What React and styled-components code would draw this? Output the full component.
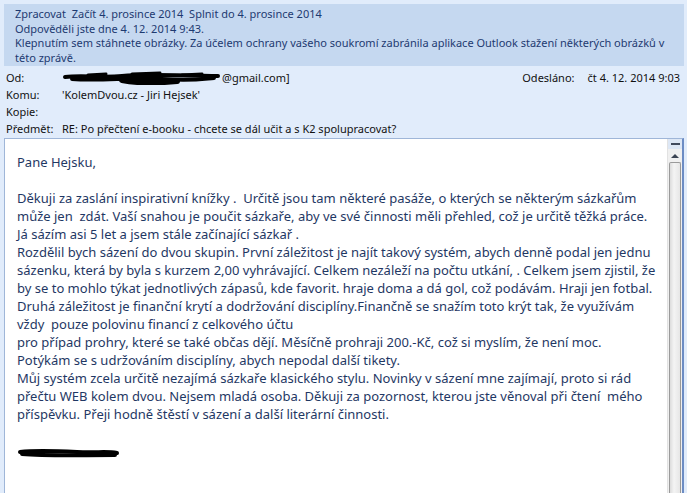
import React from 'react'
import styled, { createGlobalStyle } from 'styled-components'

const Global = createGlobalStyle`
  html, body { margin: 0; padding: 0; }
  body {
    background: #e1ecfb;
    width: 687px;
    height: 493px;
    overflow: hidden;
  }
`

const Page = styled.div`
  display: flex;
  flex-direction: column;
  height: 493px;
  padding: 4px 3px 0 4px;
  box-sizing: border-box;
  font-family: "Noto Sans", "Open Sans", sans-serif;
`

const InfoBar = styled.div`
  background: #c5d8f0;
  color: #1e3a70;
  font-size: 11px;
  line-height: 14.5px;
  padding: 3px 11px 3px 11px;
  height: 62px;
  box-sizing: border-box;
`

const Line = styled.div`
  white-space: pre;
`

const Header = styled.div`
  display: grid;
  grid-template-columns: 56px 1fr auto auto;
  grid-auto-rows: 17px;
  align-items: center;
  padding: 3px 4px 1px 2px;
  font-size: 11px;
  color: #111;
`

const Label = styled.div`
  white-space: nowrap;
`

const Value = styled.div`
  white-space: nowrap;
  display: flex;
  align-items: center;
  grid-column: ${p => (p.$wide ? '2 / 5' : 'auto')};
`

const SentLabel = styled.div`
  padding-right: 13px;
  white-space: nowrap;
`

const Body = styled.div`
  flex: 1;
  display: flex;
  background: #fff;
  border: 1px solid #9fb6d8;
  border-right: 2px solid #6c8cc4;
  border-bottom: none;
  min-height: 0;
`

const Content = styled.div`
  flex: 1;
  padding: 14px 12px 0 12px;
  color: #1f3864;
  font-size: 13px;
  line-height: 18px;
`

const Blank = styled.div`
  height: 18px;
`

const Signature = styled.div`
  padding-top: 4px;
`

const Scrollbar = styled.div`
  width: 17px;
  display: flex;
  flex-direction: column;
  background: #f0f0f0;
  border-left: 1px solid #e2e2e2;
`

const SplitBtn = styled.div`
  height: 10px;
  background: #dde7f5;
  display: flex;
  align-items: center;
  justify-content: center;
  &::before {
    content: '';
    width: 9px;
    height: 2px;
    background: #404a5c;
  }
`

const ArrowBtn = styled.div`
  height: 13px;
  display: flex;
  align-items: center;
  justify-content: center;
  &::before {
    content: '';
    border-left: 4px solid transparent;
    border-right: 4px solid transparent;
    border-bottom: 4px solid #3b4453;
  }
`

const Thumb = styled.div`
  flex: 1;
  margin: 0 1px;
  border: 1px solid #9a9a9a;
  border-bottom: none;
  border-radius: 2px 2px 0 0;
  background: linear-gradient(to right, #dcdcdc, #f4f4f4 40%, #e6e6e6);
`

const Redact = ({ w, h, d }) => (
  <svg width={w} height={h} viewBox={`0 0 ${w} ${h}`}>
    <g fill="none" stroke="#000" strokeLinecap="round" strokeLinejoin="round">
      {d.map((p, i) => (
        <path key={i} d={p[0]} strokeWidth={p[1]} />
      ))}
    </g>
  </svg>
)

const fromBlot = [
  ['M3 7 C20 5 40 8 60 6 S110 5 156 6', 4],
  ['M10 9 C40 11 70 7 100 9 S140 9 152 8', 4],
  ['M60 10 C75 13 95 13 115 11', 6],
  ['M26 5 L44 4 M70 4 L98 3 M120 5 L140 4', 3],
]

const signBlot = [
  ['M3 5 C20 3 40 4 60 5 S90 4 100 6', 4],
  ['M5 7 C30 9 60 8 98 8', 4],
]

const bodyLines = [
  'Děkuji za zaslání inspirativní knížky .  Určitě jsou tam některé pasáže, o kterých se některým sázkařům',
  'může jen  zdát. Vaší snahou je poučit sázkaře, aby ve své činnosti měli přehled, což je určitě těžká práce.',
  'Já sázím asi 5 let a jsem stále začínající sázkař .',
  'Rozdělil bych sázení do dvou skupin. První záležitost je najít takový systém, abych denně podal jen jednu',
  'sázenku, která by byla s kurzem 2,00 vyhrávající. Celkem nezáleží na počtu utkání, . Celkem jsem zjistil, že',
  'by se to mohlo týkat jednotlivých zápasů, kde favorit. hraje doma a dá gol, což podávám. Hraji jen fotbal.',
  'Druhá záležitost je finanční krytí a dodržování disciplíny.Finančně se snažím toto krýt tak, že využívám',
  'vždy  pouze polovinu financí z celkového účtu',
  'pro případ prohry, které se také občas dějí. Měsíčně prohraji 200.-Kč, což si myslím, že není moc.',
  'Potýkám se s udržováním disciplíny, abych nepodal další tikety.',
  'Můj systém zcela určitě nezajímá sázkaře klasického stylu. Novinky v sázení mne zajímají, proto si rád',
  'přečtu WEB kolem dvou. Nejsem mladá osoba. Děkuji za pozornost, kterou jste věnoval při čtení  mého',
  'příspěvku. Přeji hodně štěstí v sázení a další literární činnosti.',
]

export default function App() {
  return (
    <>
      <Global />
      <Page>
        <InfoBar>
          <Line>Zpracovat  Začít 4. prosince 2014  Splnit do 4. prosince 2014</Line>
          <Line>Odpověděli jste dne 4. 12. 2014 9:43.</Line>
          <Line>
            Klepnutím sem stáhnete obrázky. Za účelem ochrany vašeho soukromí zabránila aplikace Outlook stažení některých obrázků v
          </Line>
          <Line>této zprávě.</Line>
        </InfoBar>

        <Header>
          <Label>Od:</Label>
          <Value>
            <Redact w={160} h={15} d={fromBlot} />
            @gmail.com]
          </Value>
          <SentLabel>Odesláno:</SentLabel>
          <Label>čt 4. 12. 2014 9:03</Label>

          <Label>Komu:</Label>
          <Value $wide>'KolemDvou.cz - Jiri Hejsek'</Value>

          <Label>Kopie:</Label>
          <Value $wide />

          <Label>Předmět:</Label>
          <Value $wide>RE: Po přečtení e-booku - chcete se dál učit a s K2 spolupracovat?</Value>
        </Header>

        <Body>
          <Content>
            <Line>Pane Hejsku,</Line>
            <Blank />
            {bodyLines.map((l, i) => (
              <Line key={i}>{l}</Line>
            ))}
            <Blank />
            <Signature>
              <Redact w={104} h={12} d={signBlot} />
            </Signature>
          </Content>
          <Scrollbar>
            <SplitBtn />
            <ArrowBtn />
            <Thumb />
          </Scrollbar>
        </Body>
      </Page>
    </>
  )
}
